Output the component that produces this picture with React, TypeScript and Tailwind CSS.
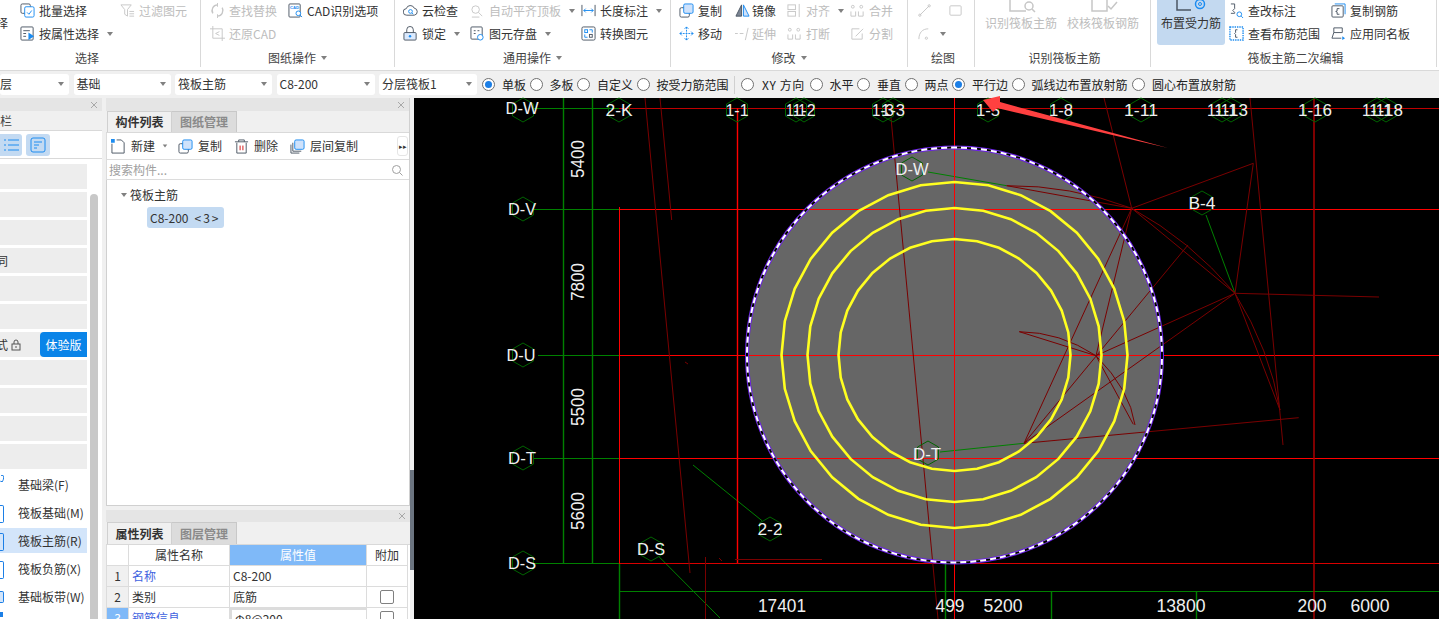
import React from 'react';

const D = '#4b5563';
const B = '#1c8cf0';
const G = '#c6c6c6';

const Svg = ({ children, size = 15 }: { children: React.ReactNode; size?: number }) => (
  <svg width={size} height={size} viewBox="0 0 16 16" fill="none" className="shrink-0">
    {children}
  </svg>
);

const Ic = {
  batch: (
    <Svg>
      <rect x="1" y="1" width="10" height="10" rx="1.500" stroke={D} />
      <rect x="5" y="4" width="10" height="11" rx="1.500" fill="#fff" stroke={B} />
      <path d="M7.500 10l2 2 3-4" stroke={B} />
    </Svg>
  ),
  filter: (
    <Svg>
      <path d="M1 2h11L8 7v7L5 12V7z" stroke={G} />
      <path d="M10 9h5M10 11.500h5M10 14h5" stroke={G} />
    </Svg>
  ),
  attr: (
    <Svg>
      <rect x="1" y="1" width="13" height="14" rx="1" stroke={D} />
      <path d="M3.500 5h7M3.500 8h3M3.500 11h3" stroke={D} />
      <path d="M9 7l6 4-6 4z" fill={B} />
    </Svg>
  ),
  find: (
    <Svg>
      <path d="M8 2a6 6 0 0 0-5 9M8 14a6 6 0 0 0 5-9" stroke={G} strokeWidth="1.500" />
      <path d="M8 0v4M8 12v4" stroke={G} />
    </Svg>
  ),
  cad: (
    <Svg>
      <rect x="1" y="1" width="12" height="14" rx="1" stroke={D} />
      <text x="2" y="6.500" fontSize="4.500" fontWeight="700" fill={B} fontFamily="Liberation Sans, sans-serif">CAD</text>
      <circle cx="11" cy="11" r="2.500" fill="#fff" stroke={B} />
      <path d="M13 13l2 2" stroke={B} />
    </Svg>
  ),
  restore: (
    <Svg>
      <path d="M3 0v13h13M0 3h13v13" stroke={G} />
      <path d="M10 6L6 8l4 2" stroke={G} />
    </Svg>
  ),
  cloud: (
    <Svg>
      <path d="M4 13a3.500 3.500 0 0 1-.5-7A4.500 4.500 0 0 1 12 5.500 3.800 3.800 0 0 1 12 13z" stroke={D} />
      <circle cx="8" cy="9" r="2" stroke={B} />
      <path d="M9.500 10.500l1.500 1.500" stroke={B} />
    </Svg>
  ),
  lock: (
    <Svg>
      <rect x="1" y="7" width="13" height="8" rx="1" fill="#dbeafe" stroke={D} />
      <path d="M4 7V4a3.500 3.500 0 0 1 7 0v3" stroke={D} />
      <circle cx="7.500" cy="11" r="1.300" fill={B} />
    </Svg>
  ),
  level: (
    <Svg>
      <circle cx="6" cy="7" r="4" stroke={G} />
      <path d="M9 10l4 4M2 15h8" stroke={G} />
    </Svg>
  ),
  save: (
    <Svg>
      <rect x="1" y="1" width="12" height="13" rx="1" stroke={D} />
      <path d="M4 5h2M8 5h2M4 8h2" stroke={D} />
      <circle cx="11" cy="12" r="3" fill="#fff" stroke={B} />
    </Svg>
  ),
  length: (
    <Svg>
      <path d="M1 2v12M15 2v12" stroke={D} />
      <path d="M3 8h10" stroke={B} />
      <path d="M5 6L3 8l2 2M11 6l2 2-2 2" stroke={B} />
    </Svg>
  ),
  convert: (
    <Svg>
      <rect x="1" y="1" width="14" height="14" rx="1.500" stroke={D} />
      <rect x="4" y="4" width="3" height="3" stroke={B} />
      <rect x="9" y="9" width="3" height="3" stroke={D} />
      <path d="M9 4h3v3M7 12H4V9" stroke={B} />
    </Svg>
  ),
  copy: (
    <Svg>
      <rect x="1" y="5" width="10" height="10" rx="1.500" stroke={D} />
      <rect x="5" y="1" width="10" height="10" rx="1.500" fill="#cfe2fb" stroke={B} />
    </Svg>
  ),
  mirror: (
    <Svg>
      <path d="M7 2v12H1z" fill="#7d8694" stroke={D} />
      <path d="M9 2v12h6z" fill="#cfe2fb" stroke={B} />
    </Svg>
  ),
  alignG: (
    <Svg>
      <rect x="1" y="2" width="8" height="5" stroke={G} />
      <rect x="1" y="9" width="8" height="5" stroke={G} />
      <path d="M13 1v14" stroke={G} />
    </Svg>
  ),
  merge: (
    <Svg>
      <circle cx="3" cy="4" r="1.500" stroke={G} />
      <circle cx="12" cy="4" r="1.500" stroke={G} />
      <path d="M1 9v5h5V9M9 9v5h5V9" stroke={G} />
    </Svg>
  ),
  move: (
    <Svg>
      <path d="M8 1v14M1 8h14" stroke={B} strokeDasharray="2 1" />
      <path d="M6 3l2-2 2 2M6 13l2 2 2-2M3 6L1 8l2 2M13 6l2 2-2 2" stroke={B} />
    </Svg>
  ),
  extend: (
    <Svg>
      <path d="M0 8h3M5 8h4M14 2l-3 13" stroke={G} />
    </Svg>
  ),
  split: (
    <Svg>
      <path d="M10 3H2v11h11V8" stroke={G} />
      <path d="M6 11l8-8" stroke={G} />
    </Svg>
  ),
  line: (
    <Svg>
      <path d="M3 13L13 3" stroke={G} />
      <circle cx="3" cy="13" r="1.200" stroke={G} />
      <circle cx="13" cy="3" r="1.200" stroke={G} />
    </Svg>
  ),
  rect: (
    <Svg>
      <rect x="2" y="3" width="12" height="10" rx="1" stroke={G} />
    </Svg>
  ),
  arc: (
    <Svg>
      <path d="M2 14C2 7 6 3 12 3" stroke={G} />
      <circle cx="10" cy="13" r="1.200" stroke={G} />
    </Svg>
  ),
  editMark: (
    <Svg>
      <path d="M2 1h4v5L4 8l2 2v1H2" stroke={D} />
      <circle cx="11" cy="12" r="2.500" stroke={B} />
      <path d="M13 14l2 2" stroke={B} />
    </Svg>
  ),
  range: (
    <Svg>
      <rect x="1" y="1" width="14" height="14" stroke={B} strokeDasharray="1.500 1" strokeWidth="1.500" />
      <path d="M9 4H7v3L6 8l1 1v3h2" stroke={D} />
    </Svg>
  ),
  copyBar: (
    <Svg>
      <rect x="1" y="3" width="12" height="12" rx="1" stroke={D} />
      <path d="M4 1h11v11" stroke={B} />
      <path d="M9 6H6.500v2.500L5 9l1.500.5V12H9" stroke={D} />
    </Svg>
  ),
  sameName: (
    <Svg>
      <path d="M3 2h9v5H3zM3 7l-2 6h10" stroke={D} />
      <path d="M12 11l3 2-3 2z" fill={B} />
    </Svg>
  ),
  newDoc: (
    <Svg>
      <path d="M1 5v10h13V4l-3-3H6" stroke={D} />
      <rect x="0" y="0" width="4" height="4" fill={B} />
    </Svg>
  ),
  trash: (
    <Svg>
      <path d="M3 4v11h10V4M1 3h14M5 3V1h6v2" stroke={D} />
      <path d="M6.500 7v5M9.500 7v5" stroke="#d01010" />
    </Svg>
  ),
  layers: (
    <Svg>
      <path d="M1 6v9h9M3 4v9h9" stroke={D} />
      <rect x="5" y="1" width="10" height="10" rx="1.500" fill="#cfe2fb" stroke={B} />
    </Svg>
  ),
};

const Caret = ({ className = '' }: { className?: string }) => (
  <span className={`inline-block w-0 h-0 border-x-[3.5px] border-x-transparent border-t-[4px] border-t-[#808080] ${className}`} />
);

const Tool = ({
  icon,
  label,
  off,
  caret,
  gap = 'gap-[4px]',
}: {
  icon?: React.ReactNode;
  label?: string;
  off?: boolean;
  caret?: boolean;
  gap?: string;
}) => (
  <div className={`h-[21px] flex items-center whitespace-nowrap ${gap} ${off ? 'text-[#bdbdbd]' : 'text-[#333]'}`}>
    {icon}
    {label && <span>{label}</span>}
    {caret && <Caret className="ml-[4px]" />}
  </div>
);

const Col = ({ w, children }: { w: string; children: React.ReactNode }) => (
  <div className={`flex flex-col gap-[2px] shrink-0 ${w}`}>{children}</div>
);

const Group = ({
  w,
  label,
  caret,
  low,
  pad = '',
  labelPad = '',
  children,
}: {
  w: string;
  label: string;
  caret?: boolean;
  low?: boolean;
  pad?: string;
  labelPad?: string;
  children: React.ReactNode;
}) => (
  <div className={`${w} h-[67px] shrink-0 flex flex-col border-r border-[#d9d9d9]`}>
    <div className={`h-[48px] flex ${pad}`}>{children}</div>
    <div className={`flex items-center justify-center gap-[5px] text-[#444] ${low ? 'mt-[3px]' : 'mt-[1px]'} ${labelPad}`}>
      <span>{label}</span>
      {caret && <Caret />}
    </div>
  </div>
);

const BigTool = ({ label, off, active, icon }: { label: string; off?: boolean; active?: boolean; icon: React.ReactNode }) => (
  <div
    className={`h-[45px] flex flex-col items-center whitespace-nowrap rounded-b-[3px] ${active ? 'bg-[#c3d9f0] text-[#333]' : ''} ${off ? 'text-[#bdbdbd]' : ''}`}
  >
    <div className="h-[14px] flex items-end overflow-hidden">{icon}</div>
    <span className="leading-[18px]">{label}</span>
  </div>
);

const Ribbon = () => (
  <div className="h-[71px] bg-white border-b border-[#d9d9d9] flex overflow-hidden">
    <Group w="w-[201px]" label="选择" labelPad="pr-[26px]">
      <div className="w-[20px] shrink-0 overflow-hidden flex items-start pt-[14px]">
        <span className="-ml-[4px] text-[#333]">择</span>
      </div>
      <Col w="w-[100px]">
        <Tool icon={Ic.batch} label="批量选择" />
        <Tool icon={Ic.attr} label="按属性选择" caret />
      </Col>
      <Col w="w-[70px]">
        <Tool icon={Ic.filter} label="过滤图元" off />
      </Col>
    </Group>
    <Group w="w-[194px]" label="图纸操作" caret pad="pl-[9px]">
      <Col w="w-[78px]">
        <Tool icon={Ic.find} label="查找替换" off />
        <Tool icon={Ic.restore} label="还原CAD" off />
      </Col>
      <Col w="w-[100px]">
        <Tool icon={Ic.cad} label="CAD识别选项" />
      </Col>
    </Group>
    <Group w="w-[276px]" label="通用操作" caret pad="pl-[8px]">
      <Col w="w-[67px]">
        <Tool icon={Ic.cloud} label="云检查" />
        <Tool icon={Ic.lock} label="锁定" caret />
      </Col>
      <Col w="w-[111px]">
        <Tool icon={Ic.level} label="自动平齐顶板" off caret />
        <Tool icon={Ic.save} label="图元存盘" caret />
      </Col>
      <Col w="w-[85px]">
        <Tool icon={Ic.length} label="长度标注" caret />
        <Tool icon={Ic.convert} label="转换图元" />
      </Col>
    </Group>
    <Group w="w-[237px]" label="修改" caret pad="pl-[8px]">
      <Col w="w-[56px]">
        <Tool icon={Ic.copy} label="复制" />
        <Tool icon={Ic.move} label="移动" />
      </Col>
      <Col w="w-[52px]">
        <Tool icon={Ic.mirror} label="镜像" gap="gap-[2px]" />
        <Tool icon={Ic.extend} label="延伸" off gap="gap-[2px]" />
      </Col>
      <Col w="w-[63px]">
        <Tool icon={Ic.alignG} label="对齐" off caret />
        <Tool icon={Ic.merge} label="打断" off />
      </Col>
      <Col w="w-[50px]">
        <Tool icon={Ic.merge} label="合并" off />
        <Tool icon={Ic.split} label="分割" off />
      </Col>
    </Group>
    <Group w="w-[67px]" label="绘图" low pad="pl-[9px]" labelPad="pl-[4px]">
      <Col w="w-[31px]">
        <Tool icon={Ic.line} />
        <Tool icon={Ic.arc} off caret />
      </Col>
      <Col w="w-[18px]">
        <Tool icon={Ic.rect} />
      </Col>
    </Group>
    <Group w="w-[176px]" label="识别筏板主筋" low pad="pl-[10px] gap-[10px]" labelPad="pl-[4px]">
      <BigTool
        label="识别筏板主筋"
        off
        icon={
          <svg width="30" height="14" viewBox="0 0 30 14" fill="none">
            <path d="M4 -4v15h16" stroke={G} strokeWidth="1.500" />
            <circle cx="23" cy="6" r="4" stroke={G} strokeWidth="1.500" />
            <path d="M26 9l3 3" stroke={G} strokeWidth="1.500" />
          </svg>
        }
      />
      <BigTool
        label="校核筏板钢筋"
        off
        icon={
          <svg width="30" height="14" viewBox="0 0 30 14" fill="none">
            <path d="M4 -4v15h15v-15" stroke={G} strokeWidth="1.500" />
            <path d="M20 6l3 3 6-7" stroke={G} strokeWidth="1.500" />
          </svg>
        }
      />
    </Group>
    <Group w="w-[286px]" label="筏板主筋二次编辑" low pad="pl-[6px]" labelPad="pl-[4px]">
      <div className="w-[72px] shrink-0">
        <div className="w-[68px]">
          <BigTool
            label="布置受力筋"
            active
            icon={
              <svg width="34" height="14" viewBox="0 0 34 14" fill="none">
                <path d="M3 -4v14h14" stroke={D} strokeWidth="1.500" />
                <circle cx="26" cy="4" r="4.500" stroke={B} strokeWidth="1.500" />
                <circle cx="26" cy="4" r="1.500" stroke={B} />
              </svg>
            }
          />
        </div>
      </div>
      <Col w="w-[102px]">
        <Tool icon={Ic.editMark} label="查改标注" />
        <Tool icon={Ic.range} label="查看布筋范围" />
      </Col>
      <Col w="w-[90px]">
        <Tool icon={Ic.copyBar} label="复制钢筋" />
        <Tool icon={Ic.sameName} label="应用同名板" />
      </Col>
    </Group>
  </div>
);

const Combo = ({ w, label, flush }: { w: string; label: string; flush?: boolean }) => (
  <div className={`${w} h-[21px] shrink-0 bg-white rounded-[3px] flex items-center justify-between pr-[5px] ${flush ? '' : 'pl-[3px]'} text-[#333]`}>
    <span className="whitespace-nowrap">{label}</span>
    <Caret />
  </div>
);

const Radio = ({ label, w, on, cls = '' }: { label: string; w: string; on?: boolean; cls?: string }) => (
  <div className="flex items-center shrink-0 mr-[3.500px]">
    <span className="w-[13px] h-[13px] rounded-full border border-[#707070] bg-white flex items-center justify-center">
      {on && <span className="w-[7px] h-[7px] rounded-full bg-[#1c7fe6]" />}
    </span>
    <span className={`${w} ml-[7px] whitespace-nowrap text-[#222] ${cls}`}>{label}</span>
  </div>
);

const OptionBar = () => (
  <div className="h-[27px] bg-[#f0f0f0] flex items-center">
    <div className="flex items-center gap-[4.500px] w-[482px] shrink-0 -mt-[1px]">
      <Combo w="w-[69px]" label="层" flush />
      <Combo w="w-[97px]" label="基础" />
      <Combo w="w-[97px]" label="筏板主筋" />
      <Combo w="w-[98px]" label="C8-200" />
      <Combo w="w-[98px]" label="分层筏板1" />
    </div>
    <Radio label="单板" w="w-[24px]" on />
    <Radio label="多板" w="w-[24px]" />
    <Radio label="自定义" w="w-[36px]" />
    <Radio label="按受力筋范围" w="w-[72px]" />
    <span className="w-px h-[18px] bg-[#d0d0d0] ml-[2px] mr-[6px]" />
    <Radio label="XY 方向" w="w-[45px]" cls="pl-[1px] tracking-[0.6px]" />
    <Radio label="水平" w="w-[24px]" />
    <Radio label="垂直" w="w-[24px]" />
    <Radio label="两点" w="w-[24px]" />
    <Radio label="平行边" w="w-[36px]" on />
    <Radio label="弧线边布置放射筋" w="w-[97px]" />
    <Radio label="圆心布置放射筋" w="w-[84px]" />
  </div>
);

const TitleBar = ({ h }: { h: string }) => (
  <div className={`${h} shrink-0 bg-[#e5e5e5] flex items-center justify-end pr-[4px] text-[#a8a8a8]`}>
    <svg width="8" height="8" viewBox="0 0 8 8" stroke="#a8a8a8">
      <path d="M1 1l6 6M7 1L1 7" />
    </svg>
  </div>
);

const LeftRow = ({ children, sel }: { children?: React.ReactNode; sel?: boolean }) => (
  <div className={`h-[25px] mb-[3px] flex items-center whitespace-nowrap text-[#333] ${sel ? 'bg-[#d3e5fa]' : ''}`}>{children}</div>
);

const Grey = ({ children }: { children?: React.ReactNode }) => (
  <div className="h-[25px] mb-[3px] bg-[#ededed] flex items-center whitespace-nowrap overflow-hidden text-[#333]">{children}</div>
);

const Stub = ({ cls = 'h-[18px] mt-[2px]' }: { cls?: string }) => (
  <span className="w-[18px] shrink-0 flex items-center">
    <span className={`w-[4px] border border-l-0 border-[#1c7fe6] rounded-r-[2px] ${cls}`} />
  </span>
);

const LeftPanel = () => (
  <div className="w-[102px] shrink-0 flex flex-col bg-white overflow-hidden">
    <TitleBar h="h-[13px]" />
    <div className="h-[20px] bg-[#f0f0f0] border-b border-[#d9d9d9] flex items-center pt-[1px]">
      <span className="text-[#444]">栏</span>
    </div>
    <div className="h-[28px] border-b border-[#d9d9d9] flex items-center gap-[4px]">
      <div className="w-[22px] h-[22px] bg-[#c3daf2] rounded-r-[3px] flex items-center justify-center">
        <svg width="16" height="14" viewBox="0 0 16 14" stroke={B} fill="none">
          <path d="M1 2h2M5 2h11M1 7h2M5 7h11M1 12h2M5 12h11" />
        </svg>
      </div>
      <div className="w-[24px] h-[22px] bg-[#c3daf2] rounded-[3px] flex items-center justify-center">
        <svg width="16" height="16" viewBox="0 0 16 16" stroke={B} fill="none">
          <rect x="1" y="1" width="14" height="14" rx="2" />
          <path d="M4 5h8M4 8h5M4 11h3" />
        </svg>
      </div>
    </div>
    <div className="flex flex-1 min-h-0">
      <div className="w-[87px] shrink-0 pt-[5px] text-[12px]">
        <Grey />
        <Grey />
        <Grey />
        <Grey>
          <span className="-ml-[4px]">同</span>
        </Grey>
        <Grey />
        <Grey />
        <Grey>
          <span className="-ml-[4px]">式</span>
          <svg width="10" height="12" viewBox="0 0 10 12" fill="none" stroke="#555" className="ml-[3px]">
            <rect x="1" y="5" width="8" height="6" />
            <path d="M3 5V3a2 2 0 0 1 4 0v2M5 7v2" />
          </svg>
          <span className="ml-auto w-[47px] h-[25px] rounded-l-[4px] bg-[#0a84e8] text-white flex items-center justify-center">体验版</span>
        </Grey>
        <Grey />
        <Grey />
        <Grey />
        <Grey />
        <LeftRow>
          <Stub cls="h-[7px] -mt-[12px] rotate-12" />
          基础梁(F)
        </LeftRow>
        <LeftRow>
          <Stub />
          筏板基础(M)
        </LeftRow>
        <LeftRow sel>
          <Stub />
          筏板主筋(R)
        </LeftRow>
        <LeftRow>
          <Stub />
          筏板负筋(X)
        </LeftRow>
        <LeftRow>
          <Stub cls="h-[12px] bg-[#d3e5fa]" />
          基础板带(W)
        </LeftRow>
        <div className="w-[3px] h-[5px] bg-[#1c7fe6]" />
      </div>
      <div className="ml-[3px] mt-[35px] w-[8px] bg-[#c8c8c8] rounded-t-[4px]" />
    </div>
  </div>
);

const Tabs = ({ a, b, h }: { a: string; b: string; h: string }) => (
  <div className={`${h} shrink-0 bg-[#f0f0f0] flex border-b border-[#d9d9d9] pl-[1px]`}>
    <div className="w-[65px] flex items-center justify-center font-bold text-[#333] border-x border-t border-[#d0d0d0]">{a}</div>
    <div className="w-[65px] flex items-center justify-center font-bold text-[#8a8a8a] bg-[#dcdcdc] border-r border-t border-[#c8c8c8]">{b}</div>
  </div>
);

const Cell = ({ children, className = '' }: { children?: React.ReactNode; className?: string }) => (
  <div className={`h-[21px] border-r border-b border-[#dcdcdc] flex items-center ${className}`}>{children}</div>
);

const Check = () => <span className="w-[14px] h-[14px] bg-white border border-[#808080] rounded-[2px]" />;

const MiddlePanel = () => (
  <div className="w-[304px] shrink-0 flex flex-col gap-[4px]">
    <div className="h-[408px] flex flex-col bg-white border-r border-b border-[#d0d0d0]">
      <TitleBar h="h-[13px]" />
      <Tabs a="构件列表" b="图纸管理" h="h-[22px]" />
      <div className="h-[27px] shrink-0 flex items-center border-b border-l border-[#dcdcdc] pl-[4px] text-[#333] relative">
        <div className="flex items-center w-[67px]">
          {Ic.newDoc}
          <span className="ml-[5px]">新建</span>
          <Caret className="ml-[7px] scale-75" />
        </div>
        <div className="flex items-center gap-[5px] w-[56px]">
          {Ic.copy}
          <span>复制</span>
        </div>
        <div className="flex items-center gap-[5px] w-[56px]">
          {Ic.trash}
          <span>删除</span>
        </div>
        <div className="flex items-center gap-[5px]">
          {Ic.layers}
          <span>层间复制</span>
        </div>
        <span className="absolute right-[1px] top-[3px] w-[11px] h-[20px] bg-white border border-[#e5e5e5] rounded-[3px] text-[7px] flex items-center justify-center">▸▸</span>
      </div>
      <div className="h-[20px] shrink-0 flex items-center justify-between border-b border-l border-[#dcdcdc] pl-[2px] pr-[6px] text-[#a0a0a0]">
        <span>搜索构件...</span>
        <svg width="12" height="12" viewBox="0 0 12 12" fill="none" stroke="#a0a0a0">
          <circle cx="5.500" cy="5.500" r="4" />
          <path d="M8.500 8.500l3 3" />
        </svg>
      </div>
      <div className="flex-1 border-l border-[#d0d0d0] pl-[13px] pt-[6px] text-[#333]">
        <div className="flex items-center gap-[3px] h-[18px] pl-[1px]">
          <Caret />
          <span>筏板主筋</span>
        </div>
        <div className="ml-[27px] mt-[3px] w-[77px] h-[21px] bg-[#c3daf2] rounded-[3px] flex items-center pl-[3px] whitespace-nowrap">
          <span>C8-200</span>
          <span className="ml-[6px] tracking-[2px]">&lt;3&gt;</span>
        </div>
      </div>
    </div>
    <div className="flex-1 flex flex-col min-h-0 overflow-hidden">
      <TitleBar h="h-[12px]" />
      <Tabs a="属性列表" b="图层管理" h="h-[23px]" />
      <div className="grid grid-cols-[22px_101px_137px_41px] bg-white text-[#333] border-l border-[#dcdcdc]">
        <Cell />
        <Cell className="justify-center">属性名称</Cell>
        <Cell className="justify-center bg-[#7fb9f8] text-white">属性值</Cell>
        <Cell className="justify-center">附加</Cell>
        <Cell className="justify-center bg-[#f0f0f0]">1</Cell>
        <Cell className="pl-[3px] text-[#3f63e0]">名称</Cell>
        <Cell className="pl-[3px]">C8-200</Cell>
        <Cell />
        <Cell className="justify-center bg-[#f0f0f0]">2</Cell>
        <Cell className="pl-[3px]">类别</Cell>
        <Cell className="pl-[3px]">底筋</Cell>
        <Cell className="justify-center">
          <Check />
        </Cell>
        <Cell className="justify-center bg-[#7fb9f8] text-white">3</Cell>
        <Cell className="pl-[3px] text-[#3f63e0]">钢筋信息</Cell>
        <Cell className="pl-[3px] border-2 border-[#808080]">Φ8@200</Cell>
        <Cell className="justify-center">
          <Check />
        </Cell>
      </div>
    </div>
  </div>
);

const Hex = ({ x, y }: { x: number; y: number }) => (
  <polygon
    points={`${x},${y - 12} ${x + 10.5},${y - 6} ${x + 10.5},${y + 6} ${x},${y + 12} ${x - 10.5},${y + 6} ${x - 10.5},${y - 6}`}
    fill="none"
    stroke="#006400"
  />
);

const Label = ({ x, y, t, len }: { x: number; y: number; t: string; len: number }) => (
  <text
    x={x}
    y={y + 6}
    textAnchor="middle"
    textLength={len}
    lengthAdjust="spacingAndGlyphs"
    fontSize="17"
    fill="#f0f0f0"
    fontFamily="Liberation Sans, sans-serif"
  >
    {t}
  </text>
);

const Dim = ({ x, y, t, len, rotate }: { x: number; y: number; t: string; len: number; rotate?: boolean }) => (
  <text
    x={x}
    y={y + 6}
    textAnchor="middle"
    textLength={len}
    lengthAdjust="spacingAndGlyphs"
    fontSize="18"
    fill="#f0f0f0"
    fontFamily="Liberation Sans, sans-serif"
    transform={rotate ? `rotate(-90 ${x} ${y})` : undefined}
  >
    {t}
  </text>
);

const ring = (r: number) =>
  Array.from({ length: 32 }, (_, i) => {
    const a = (i / 32) * Math.PI * 2;
    return `${(954.5 + Math.cos(a) * r).toFixed(1)},${(355 + Math.sin(a) * r).toFixed(1)}`;
  }).join(' ');

const bubbles: [number, number][] = [
  [523, 110], [523, 209], [523, 355], [523, 458], [523, 563],
  [619, 110], [737, 110], [796, 110], [804, 110], [883, 110], [893, 110],
  [988, 110], [1061, 110], [1141, 110], [1222, 110], [1231, 110], [1315, 110], [1377, 110], [1386, 110],
  [912, 169], [928, 453], [1202, 203], [770, 529], [651, 549],
];

const labels: [number, number, string, number][] = [
  [522, 108, 'D-W', 33], [522, 209, 'D-V', 28], [521, 355, 'D-U', 29], [522, 458, 'D-T', 28], [522, 563, 'D-S', 28],
  [619, 110, '2-K', 27], [737, 110, '1-1', 23], [796, 110, '1-1', 20], [804, 110, '1-2', 23],
  [883, 110, '1-3', 22], [893, 110, '1-3', 24], [988, 110, '1-5', 24], [1061, 110, '1-8', 24], [1141, 110, '1-11', 34],
  [1222, 110, '1-11', 30], [1231, 110, '1-13', 34], [1315, 110, '1-16', 34], [1377, 110, '1-11', 30], [1386, 110, '1-18', 34],
  [912, 169, 'D-W', 33], [927, 454, 'D-T', 28], [1202, 203, 'B-4', 27], [770, 529, '2-2', 25], [651, 549, 'D-S', 28],
];

const darkLines = [
  'M1104 98L1131.700 208.300L1253.300 163.300L1235 293.300L1131.700 208.300',
  'M1235 293.300L1280 410M1235 293.300L1379 297M1235 293.300L1096 355.700M1235 293.300L1024 443.300',
  'M1131.700 208.300L1096 355.700M1131.700 208.300L1024 443.300M1188 245L1024 443.300',
  'M1096 355.700L1133.300 424.300M1096 355.700L1019.300 331.700M1006.700 185.700L1131.700 208.300',
  'M1024 443.300L1298.700 417.700M1250 98L1283 445',
  'M645 98L690 573M660 98L671.700 220M891 118L938 619M705.500 557V619M735 559.500H822M719 558l3 3M685 362l3 2',
  'M1131.700 208.300Q1190 240 1235 293.300M1235 293.300Q1270 350 1280 410M1096 355.700Q1130 390 1135 425M1019.300 331.700Q1060 332 1096 355.700M1006.700 185.700Q1070 185 1131.700 208.300',
];

const CadCanvas = () => (
  <div className="flex-1 min-w-0 bg-black">
    <svg width="1025" height="521" viewBox="414 98 1025 521" className="block overflow-visible">
      <rect x="414" y="98" width="1025" height="521" fill="#000" />
      <circle cx="954.500" cy="355" r="207" fill="#666" />
      <g stroke="#008000" fill="none">
        <path d="M563.500 98V563M592.500 98V563M619.500 563V619M945.500 563V619M1051.500 591V619M1196.500 591V619" strokeWidth="1.400" />
        <path d="M534 108.500H619M534 209.500H619M538 355.500H619M534 458.500H619M534 563.500H619" />
        <path d="M954.500 563V619M619 591.500H1439" />
        <path d="M928 172L1006.700 185.700M940 452L1024 443.300M1206 215L1235 293.300M762 520.700L693 465M659 556.700L720 618" />
      </g>
      <g stroke="#ff0000" fill="none">
        <path d="M619 108.500H1439" strokeOpacity="0.75" />
        <path d="M619 209.500H1439M619 355.500H1439M619 458.500H1439" />
        <path d="M619 563.500H1439" strokeOpacity="0.85" />
        <path d="M619.500 207V563M954.500 98V619" />
        <path d="M737.500 108V563" strokeWidth="1.400" />
        <path d="M1314 98V619" stroke="#a80000" strokeWidth="1.500" />
      </g>
      <path d={darkLines.join(' ')} stroke="#7a0000" fill="none" />
      <circle cx="954.500" cy="355" r="207.500" fill="none" stroke="#6a20e8" strokeWidth="4" />
      <circle cx="954.500" cy="355" r="207.500" fill="none" stroke="#fff" strokeWidth="2" />
      <circle cx="954.500" cy="355" r="207.500" fill="none" stroke="#000" strokeWidth="2" strokeDasharray="4 6" />
      {[116, 147, 173].map((r) => (
        <polygon key={r} points={ring(r)} fill="none" stroke="#ffff20" strokeWidth="2.600" />
      ))}
      {bubbles.map(([x, y], i) => (
        <Hex key={i} x={x} y={y} />
      ))}
      {labels.map(([x, y, t, len], i) => (
        <Label key={i} x={x} y={y} t={t} len={len} />
      ))}
      <Dim x={578} y={159} t="5400" len={38} rotate />
      <Dim x={578} y={282} t="7800" len={38} rotate />
      <Dim x={578} y={407} t="5500" len={38} rotate />
      <Dim x={578} y={511} t="5600" len={38} rotate />
      <Dim x={782} y={606} t="17401" len={48} />
      <Dim x={950} y={606} t="499" len={29} />
      <Dim x={1003} y={606} t="5200" len={39} />
      <Dim x={1181} y={606} t="13800" len={49} />
      <Dim x={1312} y={606} t="200" len={29} />
      <Dim x={1370} y={606} t="6000" len={39} />
      <polygon points="983,100 1000,96 1000,102 1168,148 997,108 993,112" fill="#ff4040" />
    </svg>
  </div>
);

export default function App() {
  return (
    <div className="w-[1439px] h-[619px] overflow-hidden flex flex-col bg-[#f0f0f0] text-[12px] font-['Noto_Sans_CJK_SC','Liberation_Sans',sans-serif]">
      <Ribbon />
      <OptionBar />
      <div className="flex-1 min-h-0 flex">
        <LeftPanel />
        <div className="w-[4px] shrink-0" />
        <MiddlePanel />
        <div className="w-[4px] shrink-0">
          <div className="mt-[372px] h-[100px] bg-[#6b7480]" />
        </div>
        <CadCanvas />
      </div>
    </div>
  );
}
